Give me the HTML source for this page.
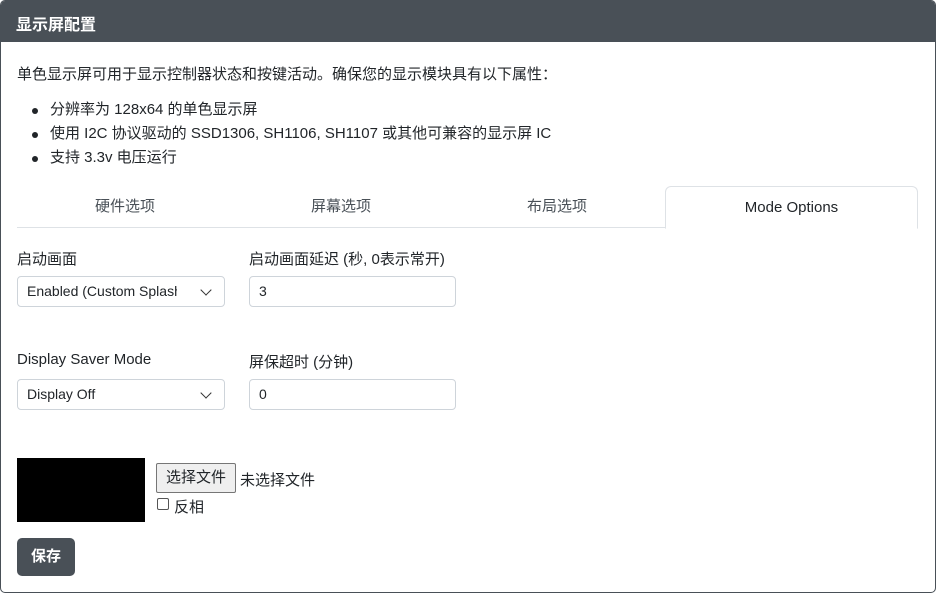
<!DOCTYPE html>
<html><head><meta charset="utf-8"><style>
*{box-sizing:border-box;margin:0;padding:0}
body{width:936px;height:593px;background:#fff;font-family:"Liberation Sans","Noto Sans CJK SC",sans-serif;font-size:15px;color:#212529;overflow:hidden}
.card{position:absolute;left:0;top:0;width:936px;height:593px;border:1px solid #495057;border-radius:5px;overflow:hidden}
.hd{height:41px;background:#495057;color:#fff;font-weight:bold;font-size:16px;padding:10px 15px}
.t{position:absolute;white-space:nowrap}
ul{position:absolute;left:16px;top:99px;list-style:none}
ul li{height:24px;line-height:20px;padding-left:33px;position:relative}
ul li:before{content:"";position:absolute;left:15px;top:8px;width:6px;height:6px;border-radius:50%;background:#212529}
.tabs{position:absolute;left:16px;top:185px;width:901px;height:42px;border-bottom:1px solid #dee2e6}
.tab{position:absolute;top:0;height:42px;text-align:center;line-height:42px;color:#495057}
.act{border:1px solid #dee2e6;border-bottom:1px solid #fff;border-radius:6px 6px 0 0;background:#fff;color:#212529}
.in{position:absolute;height:31px;border:1px solid #ced4da;border-radius:4px;font-size:14px;padding:6px 9px;line-height:17px;overflow:hidden;white-space:nowrap}
.clip{display:block;overflow:hidden;width:150px}
.chev{position:absolute;right:14px;width:8px;height:8px;border-right:1.6px solid #333;border-bottom:1.6px solid #333;transform:rotate(45deg);top:9px}
</style></head><body>
<div class="card">
<div class="hd">显示屏配置</div>
<div class="t" style="left:16px;top:62px">单色显示屏可用于显示控制器状态和按键活动。确保您的显示模块具有以下属性：</div>
<ul><li>分辨率为 128x64 的单色显示屏</li><li>使用 I2C 协议驱动的 SSD1306, SH1106, SH1107 或其他可兼容的显示屏 IC</li><li>支持 3.3v 电压运行</li></ul>
<div class="tabs">
<div class="tab" style="left:0;width:216px">硬件选项</div>
<div class="tab" style="left:216px;width:216px">屏幕选项</div>
<div class="tab" style="left:432px;width:216px">布局选项</div>
<div class="tab act" style="left:648px;width:253px;height:43px">Mode Options</div>
</div>
<div class="t" style="left:16px;top:247px">启动画面</div>
<div class="t" style="left:248px;top:247px">启动画面延迟 (秒, 0表示常开)</div>
<div class="in" style="left:16px;top:275px;width:208px"><span class="clip">Enabled (Custom Splash Screen)</span><span class="chev"></span></div>
<div class="in" style="left:248px;top:275px;width:207px">3</div>
<div class="t" style="left:16px;top:350px">Display Saver Mode</div>
<div class="t" style="left:248px;top:350px">屏保超时 (分钟)</div>
<div class="in" style="left:16px;top:378px;width:208px">Display Off<span class="chev"></span></div>
<div class="in" style="left:248px;top:378px;width:207px">0</div>
<div style="position:absolute;left:16px;top:457px;width:128px;height:64px;background:#000"></div>
<div style="position:absolute;left:155px;top:462px;width:80px;height:30px;border:1px solid #767676;border-radius:2px;background:#efefef;font-size:15px;text-align:center;line-height:28px">选择文件</div>
<div class="t" style="left:239px;top:468px">未选择文件</div>
<div style="position:absolute;left:156px;top:497px;width:12px;height:12px;border:1px solid #555;border-radius:2px"></div>
<div class="t" style="left:173px;top:495px">反相</div>
<div style="position:absolute;left:16px;top:537px;width:58px;height:38px;background:#495057;border-radius:5px;color:#fff;font-weight:bold;text-align:center;line-height:38px">保存</div>
</div>
</body></html>
